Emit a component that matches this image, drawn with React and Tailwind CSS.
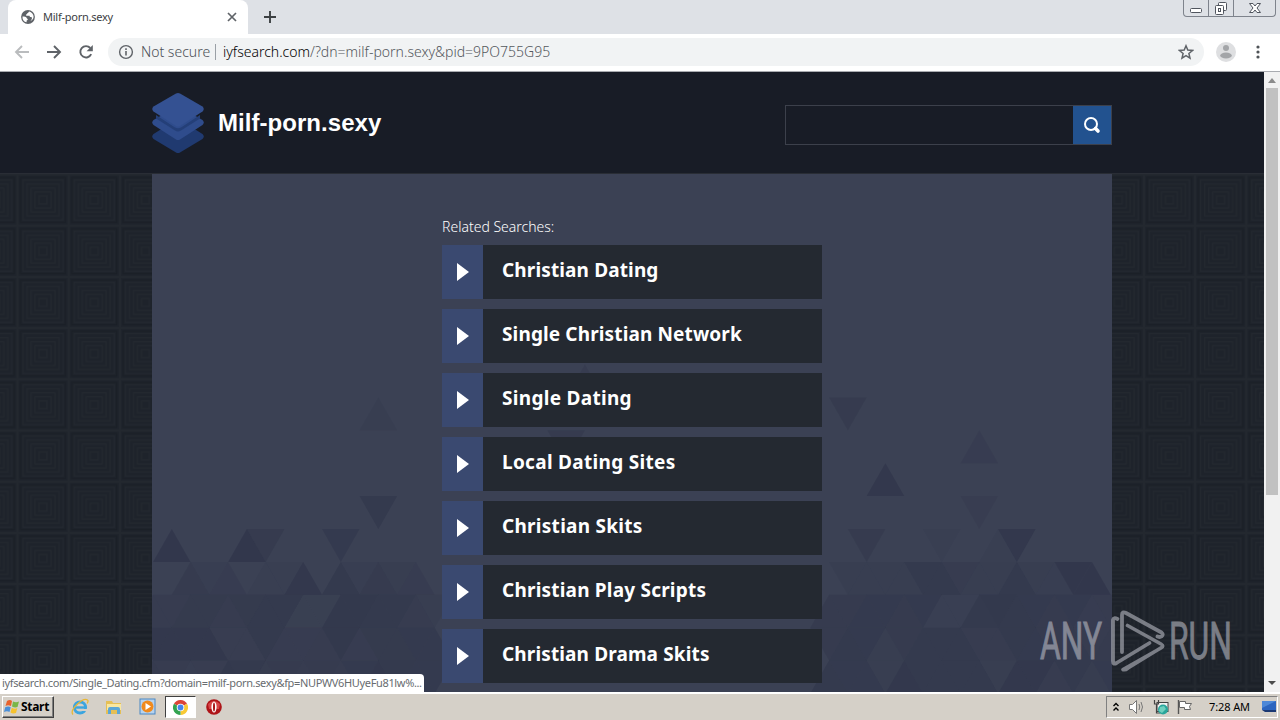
import React from "react";

const searches = [
  { text: "Christian Dating", size: "tracking-[0.13px]" },
  { text: "Single Christian Network", size: "tracking-[0.13px]" },
  { text: "Single Dating", size: "tracking-[0.3px]" },
  { text: "Local Dating Sites", size: "tracking-[0.3px]" },
  { text: "Christian Skits", size: "tracking-[0.27px]" },
  { text: "Christian Play Scripts", size: "tracking-[0.2px]" },
  { text: "Christian Drama Skits", size: "tracking-[0.13px]" },
];

// [apex column, row, points up, opacity]
const triangles = [
  [23, -5, 1, 0.5],
  [37, -4, 0, 0.6], [12, -4, 1, 0.3],
  [44, -3, 1, 0.4], [22, -3, 0, 0.6],
  [39, -2, 1, 0.9],
  [12, -1, 0, 0.8], [44, -1, 0, 0.35],
  [1, 0, 1, 1], [5, 0, 1, 1], [6, 0, 0, 0.6], [10, 0, 0, 0.7],
  [38, 0, 0, 0.6], [42, 0, 0, 0.2], [46, 0, 0, 0.9], [45, 0, 1, 0.2],
  [2, 1, 1, 0.6], [4, 1, 1, 0.4], [8, 1, 1, 0.9], [10, 1, 1, 0.8], [12, 1, 1, 0.6],
  [13, 1, 0, 0.3], [14, 1, 1, 0.4], [3, 1, 0, 0.25], [6, 1, 1, 0.2], [7, 1, 0, 0.2], [11, 1, 0, 0.25],
  [37, 1, 0, 0.3], [38, 1, 1, 0.3], [39, 1, 0, 0.3], [40, 1, 1, 0.3],
  [41, 1, 0, 0.8], [42, 1, 1, 0.8], [43, 1, 0, 0.5], [44, 1, 1, 0.3], [45, 1, 0, 0.3],
  [46, 1, 1, 0.8], [47, 1, 0, 0.3], [48, 1, 1, 0.25], [49, 1, 0, 1], [50, 1, 1, 1],
  [0, 2, 1, 0.5], [1, 2, 0, 0.5], [2, 2, 1, 0.65], [3, 2, 0, 0.65], [4, 2, 1, 0.5], [5, 2, 0, 0.65],
  [6, 2, 1, 0.8], [7, 2, 0, 0.8], [8, 2, 1, 0.1], [9, 2, 0, 0.1], [10, 2, 1, 0.85], [11, 2, 0, 0.85],
  [12, 2, 1, 0.75], [13, 2, 0, 0.75], [14, 2, 1, 0.5], [15, 2, 0, 0.3],
  [36, 2, 1, 0.55], [37, 2, 0, 0.6], [38, 2, 1, 0.7], [39, 2, 0, 0.7], [40, 2, 1, 0.6], [41, 2, 0, 0.7],
  [42, 2, 1, 0.15], [43, 2, 0, 0.15], [44, 2, 1, 0.75], [45, 2, 0, 0.85], [46, 2, 1, 0.8], [47, 2, 0, 0.7],
  [48, 2, 1, 0.55], [49, 2, 0, 0.7], [50, 2, 1, 0.4], [51, 2, 0, 0.5],
  [0, 3, 0, 0.9], [1, 3, 1, 0.9], [2, 3, 0, 0.9], [3, 3, 1, 0.9], [4, 3, 0, 0.35], [5, 3, 1, 0.35],
  [6, 3, 0, 0.8], [7, 3, 1, 0.4], [8, 3, 0, 0.4], [9, 3, 1, 0.5], [10, 3, 0, 0.85], [11, 3, 1, 0.4],
  [12, 3, 0, 0.65], [13, 3, 1, 0.65], [14, 3, 0, 0.7], [15, 3, 1, 0.7],
  [36, 3, 0, 0.6], [37, 3, 1, 0.8], [38, 3, 0, 0.7], [39, 3, 1, 0.3], [40, 3, 0, 0.6], [41, 3, 1, 0.75],
  [42, 3, 0, 0.8], [43, 3, 1, 0.8], [44, 3, 0, 0.5], [45, 3, 1, 0.5], [46, 3, 0, 0.8], [47, 3, 1, 0.7],
  [48, 3, 0, 0.6], [49, 3, 1, 0.7], [50, 3, 0, 0.5], [51, 3, 1, 0.6],
  [0, 4, 1, 0.6], [1, 4, 0, 0.5], [2, 4, 1, 0.25], [3, 4, 0, 0.35], [4, 4, 1, 0.85], [5, 4, 0, 0.8],
  [6, 4, 1, 0.45], [7, 4, 0, 0.6], [8, 4, 1, 0.5], [9, 4, 0, 0.55], [10, 4, 1, 0.5], [11, 4, 0, 0.7],
  [12, 4, 1, 0.9], [13, 4, 0, 0.75], [14, 4, 1, 0.7], [15, 4, 0, 0.7],
  [36, 4, 1, 0.8], [37, 4, 0, 0.7], [38, 4, 1, 0.7], [39, 4, 0, 0.3], [40, 4, 1, 0.9], [41, 4, 0, 0.8],
  [42, 4, 1, 0.75], [43, 4, 0, 0.8], [44, 4, 1, 0.8], [45, 4, 0, 0.3], [46, 4, 1, 0.9], [47, 4, 0, 0.9],
  [48, 4, 1, 0.5], [49, 4, 0, 0.8], [50, 4, 1, 0.45], [51, 4, 0, 0.7],
];

const trianglePoints = ([col, row, up]) => {
  const w = 18.78;
  const h = 32.9;
  const x = 1 + col * w;
  const top = 355 + row * h;
  const tip = up ? top : top + h;
  const base = up ? top + h : top;
  return `${x},${tip} ${x - w},${base} ${x + w},${base}`;
};

const TabStrip = () => (
  <div className="flex h-[34px] shrink-0 items-start bg-[#dee1e6] pl-2">
    <div className="flex h-[34px] w-[240px] items-center rounded-t-lg bg-white pl-[13px] pr-[10px]">
      <svg className="h-[14px] w-[14px]" viewBox="0 0 14 14">
        <circle cx="7" cy="7" r="6.9" fill="#5f6368" />
        <path d="M8.2 1.4c-1 .6-.6 1.7-1.8 1.9-.6.2-.2 1.2-1.2 1.3-.5.1-.3 1.2.4 1.2h2.9c.4.7.2 1.3 1.1 1.3.9-.1 1.5.5 1.3 1.4-.2 1.2-.9 2-2 2.8 2.2-.8 3.7-2.5 3.7-4.6 0-2.6-1.9-4.7-4.4-5.3z" fill="#fff" />
        <path d="M1.5 6.4c1.7.1 4 .2 4.2 1.5.2.9 1.2.7 1.1 1.6-.2.9-1.2.6-1.2 1.6v1.2C3 11.8 1.2 9.6 1.5 6.4z" fill="#fff" />
      </svg>
      <span className="ml-2 whitespace-nowrap text-[11px] leading-4 tracking-[-0.25px] text-[#3c4043]">Milf-porn.sexy</span>
      <svg className="ml-auto h-3 w-3" viewBox="0 0 12 12" stroke="#5f6368" strokeWidth="1.7">
        <path d="M2 2l8 8M10 2l-8 8" />
      </svg>
    </div>
    <svg className="ml-[15px] mt-[10px] h-[14px] w-[14px]" viewBox="0 0 14 14" stroke="#3c4043" strokeWidth="1.9">
      <path d="M7 1v12M1 7h12" />
    </svg>
    <div className="ml-auto mr-1 flex h-[17px] w-[93px] rounded-b-[4px] border border-t-0 border-[#7e838c]">
      <div className="flex w-[25px] items-center justify-center border-r border-[#7e838c]">
        <svg className="h-4 w-4" viewBox="0 0 16 16">
          <rect x="2.5" y="8.5" width="11" height="4" rx="1" fill="#fff" stroke="#50555e" />
        </svg>
      </div>
      <div className="flex w-[25px] items-center justify-center border-r border-[#7e838c]">
        <svg className="h-4 w-4" viewBox="0 0 16 16" fill="#fff" stroke="#50555e">
          <rect x="5.5" y="2.5" width="8" height="8" rx="1" />
          <rect x="2.5" y="5.5" width="8" height="9" rx="1" />
          <rect x="5.5" y="8.5" width="2" height="3" />
        </svg>
      </div>
      <div className="flex flex-1 items-center justify-center">
        <svg className="h-4 w-4" viewBox="0 0 16 16">
          <path d="M2.5 3.5h3.5l2 2.5 2-2.5h3.5l-3.5 4.5 3.5 4.5h-3.5l-2-2.5-2 2.5h-3.5l3.5-4.5z" fill="#fff" stroke="#50555e" />
        </svg>
      </div>
    </div>
  </div>
);

const Toolbar = () => (
  <div className="flex h-[38px] shrink-0 items-center border-b border-[#a9abb0] bg-white pb-px pl-[14px] pr-[14px]">
    <svg className="h-4 w-4" viewBox="0 0 16 16" fill="none" stroke="#babcbe" strokeWidth="1.9">
      <path d="M15 8H2.500M8 2L2 8l6 6" />
    </svg>
    <svg className="ml-4 h-4 w-4" viewBox="0 0 16 16" fill="none" stroke="#5f6368" strokeWidth="1.9">
      <path d="M1 8h12.500M8 2l6 6-6 6" />
    </svg>
    <svg className="ml-4 h-4 w-4" viewBox="0 0 16 16">
      <path d="M13.200 10.200A5.700 5.700 0 1 1 12.300 4" fill="none" stroke="#5f6368" strokeWidth="1.9" />
      <path d="M14.800 1v6.200H8.600z" fill="#5f6368" />
    </svg>
    <div className="ml-[14px] flex h-[28px] w-[1096px] items-center rounded-full bg-[#f1f3f4] pl-[10px] pr-[10px] text-[14px] leading-5">
      <svg className="h-4 w-4 shrink-0" viewBox="0 0 16 16">
        <circle cx="8" cy="8" r="6.4" fill="none" stroke="#5f6368" strokeWidth="1.4" />
        <path d="M8 7v4.500M8 4.300v1.600" stroke="#5f6368" strokeWidth="1.6" />
      </svg>
      <span className="ml-[7px] w-[67px] whitespace-nowrap font-light text-[#4b4f54]">Not secure</span>
      <span className="ml-[7px] h-4 w-px bg-[#9aa0a6]" />
      <span className="ml-[7px] whitespace-nowrap font-light text-[#54585d]">
        <span className="text-black">iyfsearch.com</span>/?dn=milf-porn.sexy&amp;pid=9PO755G95
      </span>
      <svg className="ml-auto h-4 w-4 shrink-0" viewBox="0 0 16 16" fill="none" stroke="#5f6368" strokeWidth="1.5">
        <path d="M8 1.800l1.800 4.300 4.700.4-3.600 3 1.100 4.600L8 11.700l-4 2.400 1.100-4.600-3.600-3 4.700-.4z" />
      </svg>
    </div>
    <svg className="ml-3 h-5 w-5" viewBox="0 0 20 20">
      <circle cx="10" cy="10" r="10" fill="#dedfe1" />
      <circle cx="10" cy="6" r="3" fill="#a3a5a8" />
      <ellipse cx="10" cy="13.5" rx="5.8" ry="3" fill="#a3a5a8" />
    </svg>
    <svg className="ml-auto h-4 w-4" viewBox="0 0 16 16" fill="#4f5357">
      <circle cx="8" cy="3" r="1.6" />
      <circle cx="8" cy="8" r="1.6" />
      <circle cx="8" cy="13" r="1.6" />
    </svg>
  </div>
);

const Header = () => (
  <div className="flex h-[102px] justify-center border-b border-[#292d35] bg-[#181c26]">
    <div className="flex w-[960px] items-start">
      <svg className="mt-[20px] h-[62px] w-[52px]" viewBox="0 0 52 62">
        <path d="M1.500 42L24 28q2-1 4 0l22.500 14q2.500 2.500 0 5L28 60.500q-2 1-4 0L1.500 47q-2.500-2.500 0-5z" fill="#203a70" />
        <path d="M1.500 28L24 15q2-1 4 0l22.500 13q2.500 2.500 0 5L28 47.500q-2 1-4 0L1.500 33q-2.500-2.500 0-5z" fill="#2f4c8c" />
        <path d="M4 23l19 12.500q3 1.500 6 0L48 23v3.500L29 38.500q-3 1.800-6 0L4 26.500z" fill="#243f78" />
        <path d="M1.500 14.500L24 1.500q2-1 4 0l22.500 13q2.500 2.500 0 5L28 34q-2 1-4 0L1.500 19.500q-2.500-2.500 0-5z" fill="#345192" />
      </svg>
      <h1 className="ml-[14px] mt-[36px] whitespace-nowrap font-['Liberation_Sans',sans-serif] text-[24px] font-bold leading-[30px] tracking-[0.05px] text-white">
        Milf-porn.sexy
      </h1>
      <div className="ml-auto mt-[33px] flex h-[40px] w-[327px] border border-[#3c404b]">
        <div className="flex-1" />
        <button className="flex w-[38px] items-center justify-center bg-[#22528f]">
          <svg className="h-[18px] w-[18px]" viewBox="0 0 18 18">
            <circle cx="8" cy="8" r="6" fill="none" stroke="#fff" strokeWidth="2" />
            <path d="M12.500 12.500l2.500 2.500" stroke="#fff" strokeWidth="3.6" strokeLinecap="round" />
          </svg>
        </button>
      </div>
    </div>
  </div>
);

const Backdrop = () => (
  <svg className="col-start-1 row-start-1 h-[518px] w-[1264px]" viewBox="0 0 1264 518">
    <defs>
      <pattern id="squares" x="17.5" y="0.5" width="51.2" height="51.2" patternUnits="userSpaceOnUse">
        <rect width="51.2" height="51.2" fill="#1e232b" />
        <g fill="none" stroke="#23282f" strokeWidth="1.2">
          <rect x="0.5" y="0.5" width="50.2" height="50.2" />
          <rect x="5.5" y="5.5" width="40" height="40" />
          <rect x="9.5" y="9.5" width="32" height="32" />
          <rect x="13.5" y="13.5" width="24" height="24" />
          <rect x="17.5" y="17.5" width="16" height="16" />
          <rect x="21.5" y="21.5" width="8" height="8" />
        </g>
        <rect x="3" y="3" width="45" height="45" fill="none" stroke="#1a1f26" strokeWidth="1.2" />
      </pattern>
    </defs>
    <rect width="1264" height="518" fill="url(#squares)" />
  </svg>
);

const Results = () => (
  <div className="col-start-1 row-start-1 grid h-[518px] w-[960px] justify-self-center overflow-hidden bg-[#3b4154]">
    <svg className="col-start-1 row-start-1 h-[518px] w-[960px]" viewBox="0 0 960 518">
      {triangles.map((t) => (
        <polygon key={t.join("-")} points={trianglePoints(t)} fill="#31364b" fillOpacity={t[3] * 0.85} />
      ))}
    </svg>
    <div className="col-start-1 row-start-1 w-[380px] justify-self-center pt-[43px]">
      <p className="h-[28px] whitespace-nowrap font-['Noto_Sans',sans-serif] text-[14px] font-light leading-5 text-white">
        Related Searches:
      </p>
      <div className="flex flex-col gap-[10px]">
        {searches.map((item) => (
          <div key={item.text} className="flex h-[54px] bg-[#242931]">
            <div className="flex w-[41px] items-center justify-center bg-[#3a4970]">
              <svg className="h-5 w-3" viewBox="0 0 12 20">
                <path d="M0 1l12 9-12 9z" fill="#fff" />
              </svg>
            </div>
            <span className={`ml-[19px] mt-[10px] whitespace-nowrap font-['Noto_Sans',sans-serif] text-[19px] font-bold leading-[30px] text-white ${item.size}`}>
              {item.text}
            </span>
          </div>
        ))}
      </div>
    </div>
  </div>
);

const Scrollbar = () => (
  <div className="flex w-4 flex-col items-center bg-[#f1f1f1]">
    <svg className="h-4 w-4 shrink-0" viewBox="0 0 16 16">
      <path d="M4 11l4-5 4 5z" fill="#8b8b8b" />
    </svg>
    <div className="h-[407px] w-3 bg-[#c1c1c1]" />
    <svg className="mt-auto h-[18px] w-4 shrink-0" viewBox="0 0 16 18">
      <path d="M4 7l4 4 4-4z" fill="#4c4c4c" />
    </svg>
  </div>
);

const Watermark = () => (
  <svg className="absolute left-[1032px] top-[604px] h-[72px] w-[208px] overflow-visible opacity-60" viewBox="0 0 208 72">
    <g fill="#b7b9c2" stroke="#b7b9c2" strokeWidth="0.9" fontFamily="Roboto, sans-serif" fontSize="51">
      <text x="8" y="55" textLength="62" lengthAdjust="spacingAndGlyphs">ANY</text>
      <text x="137" y="55" textLength="63" lengthAdjust="spacingAndGlyphs">RUN</text>
    </g>
    <g fill="none" stroke="#b7b9c2" strokeWidth="3.8" strokeLinejoin="round" strokeLinecap="round">
      <path d="M85.500 15q-4-2-4.500 1v41q0 4 3.500 2l33-20" />
      <path d="M90 48V11q0-4 4-2l35.500 19.500q2.500 2 0 4-1.500 1-4 0" />
      <path d="M95.500 21.500L129 40q3.500 2 0 4L91 65.500M129.500 43.500L96 64q-3 2.500-4.500 1.500" strokeWidth="3.6" />
    </g>
  </svg>
);

const Taskbar = () => (
  <div className="flex h-[28px] shrink-0 items-center border-t-2 border-white bg-[#d5d0c8]">
    <button className="ml-[2px] flex h-[22px] w-[52px] items-center border border-b-[#404040] border-l-white border-r-[#404040] border-t-white pl-px shadow-[inset_-1px_-1px_0_#808080]">
      <svg className="h-4 w-4 shrink-0" viewBox="0 0 16 16">
        <path d="M3 2q3-2 5 0L7 7Q4 5.500 1.500 7z" fill="#e8622c" />
        <path d="M9 2.500q3 1.500 6 0L13.500 8Q11 9 8 7.500z" fill="#7ab648" />
        <path d="M1.200 8.200q3-1.600 5.500 0L5.500 13Q3 11.500 0 13z" fill="#4a8fd8" />
        <path d="M7.800 8.800q3 1.500 5.500.3L12 14q-3 1.200-5.500-.5z" fill="#f6c22e" />
      </svg>
      <span className="ml-px text-[12px] font-bold leading-4 tracking-[-0.3px] text-black">Start</span>
    </button>
    <svg className="ml-[17px] h-[18px] w-[18px]" viewBox="0 0 18 18">
      <circle cx="9" cy="9.5" r="5.6" fill="none" stroke="#3ca5df" strokeWidth="3" />
      <path d="M4 9.500h11" stroke="#3ca5df" strokeWidth="2.4" />
      <path d="M11 11h7v2h-7z" fill="#d5d0c8" />
      <path d="M2 16.500C-2 12 12-1 16.500 2c1 .8.6 2-.4 3.500" fill="none" stroke="#e9b735" strokeWidth="1.3" />
    </svg>
    <svg className="ml-4 h-[18px] w-[18px]" viewBox="0 0 18 18">
      <path d="M1 3h6l1 2h8v11H1z" fill="#e5bf56" />
      <path d="M2 6h14v6H2z" fill="#f9e7a0" />
      <path d="M3 16v-5q0-2 2-2h8q2 0 2 2v5h-3v-4H6v4z" fill="#5ba6d6" />
    </svg>
    <svg className="ml-4 h-[18px] w-[18px]" viewBox="0 0 18 18">
      <rect x="1" y="1" width="15" height="15" fill="#b7d3ee" stroke="#4a87c4" />
      <circle cx="8.5" cy="8.5" r="6" fill="#f08a1d" />
      <path d="M6.500 5l5.500 3.500L6.500 12z" fill="#fff" />
    </svg>
    <div className="ml-[8px] flex h-[22px] w-[31px] items-center justify-center border border-b-white border-l-[#404040] border-r-white border-t-[#404040] bg-white">
      <svg className="h-[15px] w-[15px]" viewBox="0 0 16 16">
        <path d="M8 8L1.070 4A8 8 0 0 1 14.930 4z" fill="#dc4437" />
        <path d="M8 8L14.930 4A8 8 0 0 1 8 16z" fill="#f8c934" />
        <path d="M8 8v8A8 8 0 0 1 1.070 4z" fill="#32a350" />
        <circle cx="8" cy="8" r="4" fill="#fff" />
        <circle cx="8" cy="8" r="3.1" fill="#4585ed" />
      </svg>
    </div>
    <svg className="ml-[10px] h-4 w-4" viewBox="0 0 16 16">
      <circle cx="8" cy="8" r="7.8" fill="#ae1418" />
      <path d="M2 5q6-6 12 0l-1 5H3z" fill="#d74548" />
      <ellipse cx="8" cy="8" rx="2.6" ry="5.5" fill="#fff" />
      <ellipse cx="8" cy="8" rx="1" ry="4.6" fill="#a81216" />
    </svg>
    <div className="ml-auto mr-[2px] flex h-[22px] w-[172px] items-center border border-b-white border-l-[#808080] border-r-white border-t-[#808080]">
      <svg className="ml-[5px] h-3 w-2" viewBox="0 0 8 12" fill="none" stroke="#000" strokeWidth="1.4">
        <path d="M1.500 5L4 2.500 6.500 5M1.500 9.500L4 7l2.500 2.500" />
      </svg>
      <svg className="ml-[8px] h-4 w-[18px]" viewBox="0 0 18 16">
        <path d="M1.500 5.500h3l4-4v13l-4-4h-3z" fill="#fff" stroke="#777" />
        <path d="M11 5q1.500 3 0 6M13 3q3 5 0 10" fill="none" stroke="#777" />
      </svg>
      <svg className="ml-[7px] h-4 w-4" viewBox="0 0 16 16">
        <rect x="4" y="3.5" width="11" height="9" fill="#f2f2f2" stroke="#444" />
        <path d="M1.500 1v4h4V1M3.500 5v9h4" fill="none" stroke="#444" strokeWidth="1.2" />
        <circle cx="10" cy="10.5" r="5" fill="#28a69b" />
        <path d="M7 8l4-1 2 3-4 4-3-2z" fill="#70d0bf" />
      </svg>
      <svg className="ml-[8px] h-4 w-4" viewBox="0 0 16 16">
        <path d="M1.500 1v14" stroke="#555" strokeWidth="1.4" />
        <path d="M2.500 2.500h6v2h6l-2 3 1 3h-6v-2h-5z" fill="#fff" stroke="#666" />
      </svg>
      <span className="ml-[16px] whitespace-nowrap text-[11px] leading-4 tracking-[-0.1px] text-black">7:28 AM</span>
      <svg className="ml-auto h-[14px] w-4" viewBox="0 0 16 14">
        <path d="M1 1h14v9H1z" fill="#2c65bf" />
        <path d="M1 1h14L1 8z" fill="#4d88d8" />
        <path d="M1 10h14v2H4z" fill="#1b3973" />
      </svg>
    </div>
  </div>
);

const App = () => {
  return (
    <div className="relative flex h-[720px] w-[1280px] flex-col overflow-hidden font-['Noto_Sans',sans-serif]">
      <TabStrip />
      <Toolbar />
      <div className="flex h-[620px] shrink-0">
        <div className="w-[1264px]">
          <Header />
          <div className="grid">
            <Backdrop />
            <Results />
          </div>
        </div>
        <Scrollbar />
      </div>
      <Taskbar />

      {/* Link preview */}
      <div className="absolute left-0 top-[674px] flex h-[18px] w-[424px] items-center rounded-tr-[4px] bg-white pl-[2px]">
        <span className="whitespace-nowrap text-[11px] leading-4 tracking-[-0.35px] text-[#686c70]">
          iyfsearch.com/Single_Dating.cfm?domain=milf-porn.sexy&amp;fp=NUPWV6HUyeFu81lw%...
        </span>
      </div>
      <Watermark />
    </div>
  );
};

export default App;
